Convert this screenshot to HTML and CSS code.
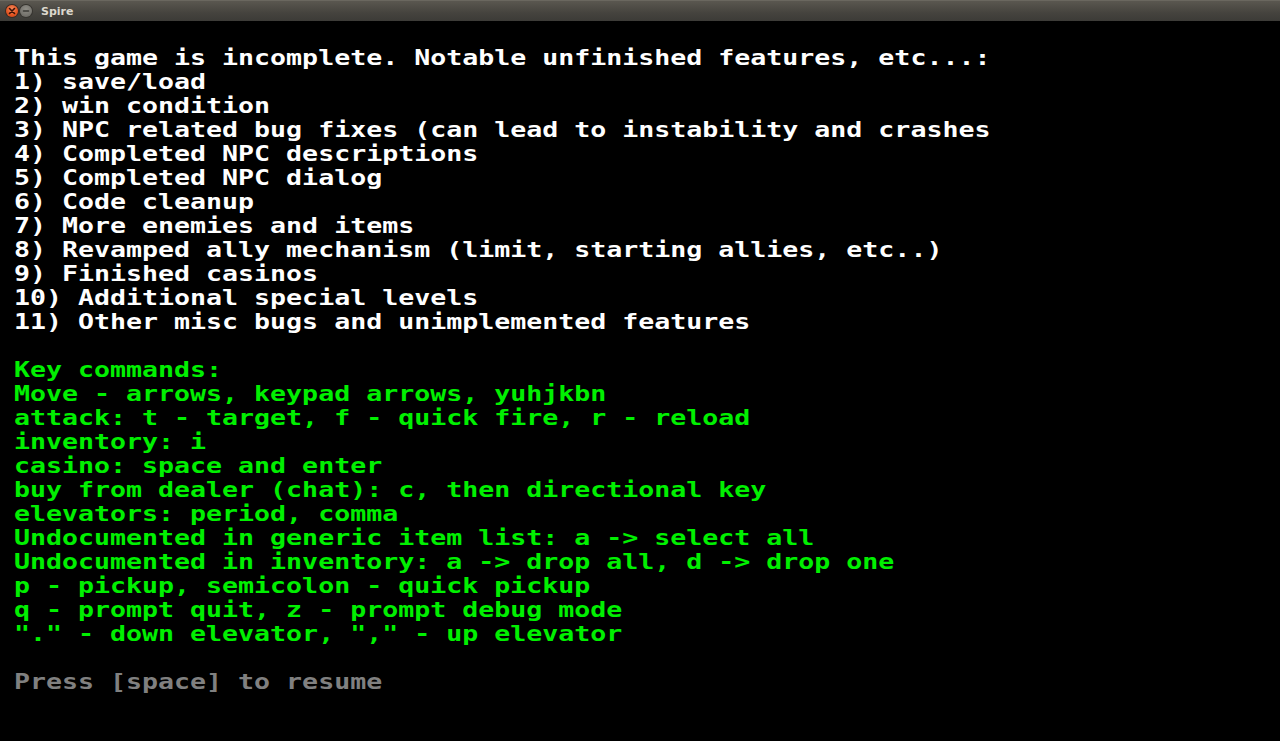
FILE: index.html
```html
<!DOCTYPE html>
<html>
<head>
<meta charset="utf-8">
<title>Spire</title>
<link rel="stylesheet" href="styles.css">
</head>
<body>
<div class="titlebar">
  <div class="buttons">
    <span class="btn close"><svg width="8" height="8" viewBox="0 0 8 8"><path d="M1.5 1.5 L6.5 6.5 M6.5 1.5 L1.5 6.5" stroke="#3a1206" stroke-width="1.6" stroke-linecap="round"/></svg></span>
    <span class="btn minimize"><svg width="8" height="8" viewBox="0 0 8 8"><path d="M1.5 4 L6.5 4" stroke="#3b3a36" stroke-width="1.6" stroke-linecap="round"/></svg></span>
  </div>
  <span class="title">Spire</span>
</div>
<div class="screen">
<pre class="term"><span class="white">This game is incomplete. Notable unfinished features, etc...:
1) save/load
2) win condition
3) NPC related bug fixes (can lead to instability and crashes
4) Completed NPC descriptions
5) Completed NPC dialog
6) Code cleanup
7) More enemies and items
8) Revamped ally mechanism (limit, starting allies, etc..)
9) Finished casinos
10) Additional special levels
11) Other misc bugs and unimplemented features</span>

<span class="green">Key commands:
Move - arrows, keypad arrows, yuhjkbn
attack: t - target, f - quick fire, r - reload
inventory: i
casino: space and enter
buy from dealer (chat): c, then directional key
elevators: period, comma
Undocumented in generic item list: a -&gt; select all
Undocumented in inventory: a -&gt; drop all, d -&gt; drop one
p - pickup, semicolon - quick pickup
q - prompt quit, z - prompt debug mode
"." - down elevator, "," - up elevator</span>

<span class="gray">Press [space] to resume</span></pre>
</div>
</body>
</html>
```
FILE: styles.css
```css
html, body {
  margin: 0;
  padding: 0;
  background: #000;
  width: 1280px;
  height: 741px;
  overflow: hidden;
}

.titlebar {
  height: 21px;
  display: flex;
  align-items: center;
  background: linear-gradient(#5a5750, #45433e 60%, #3c3b37);
  box-sizing: border-box;
  border-top: 1px solid #6a675f;
}

.buttons {
  display: flex;
  gap: 2px;
  padding-left: 6px;
  align-items: center;
}

.btn {
  width: 12px;
  height: 12px;
  border-radius: 50%;
  display: flex;
  align-items: center;
  justify-content: center;
}

.btn svg { display: block; }

.close {
  background: radial-gradient(circle at 50% 35%, #f58a5e, #e3531f 60%, #b8401a);
  box-shadow: 0 0 0 1px #3a2a22;
}

.minimize {
  background: radial-gradient(circle at 50% 35%, #8f8d86, #77756f 60%, #5f5d58);
  box-shadow: 0 0 0 1px #36342f;
}

.title {
  margin-left: 9px;
  font-family: "DejaVu Sans", "Open Sans", sans-serif;
  font-weight: bold;
  font-size: 11px;
  color: #dcd8ce;
}

.screen {
  padding: 25px 0 0 14px;
}

.term {
  display: inline-block;
  margin: 0;
  font-family: "DejaVu Sans Mono", "Liberation Mono", monospace;
  font-weight: bold;
  font-size: 22px;
  line-height: 24px;
  transform: scaleX(1.2085);
  transform-origin: 0 0;
  white-space: pre;
}

.white { color: #ffffff; }
.green { color: #00f000; }
.gray { color: #808080; }
```
